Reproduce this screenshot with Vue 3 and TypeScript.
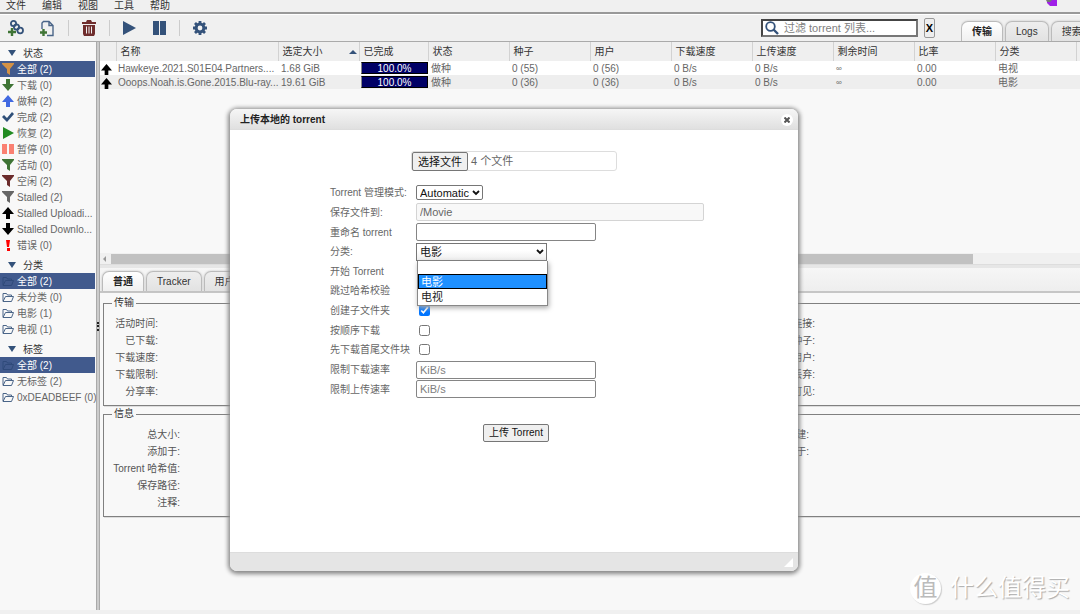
<script setup lang="ts">
import { ref } from 'vue'

interface FilterItem { icon: string; color: string; label: string; selected?: boolean }
interface FilterGroup { title: string; items: FilterItem[] }
interface Torrent { name: string; size: string; progress: string; status: string; seeds: string; peers: string; category: string }

const menus: string[] = ['文件', '编辑', '视图', '工具', '帮助']

const shapes: Record<string, string> = {
  funnel: 'M0 0H12V1L8 6V12L5 10V6L0 1Z',
  down: 'M4 0H8V5H12L6 12L0 5H4Z',
  up: 'M4 12H8V7H12L6 0L0 7H4Z',
  check: 'M0 6L2 4L5 7L10 1L12 3L5 11Z',
  play: 'M1 0L12 6L1 12Z',
  pause: 'M0 1H5V11H0ZM7 1H12V11H7Z',
  error: 'M4 1H8L7 8H5ZM5 9H8V12H5Z',
}

const groups: FilterGroup[] = [
  {
    title: '状态',
    items: [
      { icon: 'funnel', color: '#d39145', label: '全部 (2)', selected: true },
      { icon: 'down', color: '#3f7435', label: '下载 (0)' },
      { icon: 'up', color: '#4169e1', label: '做种 (2)' },
      { icon: 'check', color: '#2f4f78', label: '完成 (2)' },
      { icon: 'play', color: '#228b22', label: '恢复 (2)' },
      { icon: 'pause', color: '#fa8072', label: '暂停 (0)' },
      { icon: 'funnel', color: '#3f7435', label: '活动 (0)' },
      { icon: 'funnel', color: '#6b2c2c', label: '空闲 (2)' },
      { icon: 'funnel', color: '#666666', label: 'Stalled (2)' },
      { icon: 'up', color: '#000000', label: 'Stalled Uploadi...' },
      { icon: 'down', color: '#000000', label: 'Stalled Downlo...' },
      { icon: 'error', color: '#ff0000', label: '错误 (0)' },
    ],
  },
  {
    title: '分类',
    items: [
      { icon: 'folder', color: '#2f4a7a', label: '全部 (2)', selected: true },
      { icon: 'folder', color: '#4a6588', label: '未分类 (0)' },
      { icon: 'folder', color: '#4a6588', label: '电影 (1)' },
      { icon: 'folder', color: '#4a6588', label: '电视 (1)' },
    ],
  },
  {
    title: '标签',
    items: [
      { icon: 'folder', color: '#2f4a7a', label: '全部 (2)', selected: true },
      { icon: 'folder', color: '#4a6588', label: '无标签 (2)' },
      { icon: 'folder', color: '#4a6588', label: '0xDEADBEEF (0)' },
    ],
  },
]

const columns: string[] = ['', '名称', '选定大小', '已完成', '状态', '种子', '用户', '下载速度', '上传速度', '剩余时间', '比率', '分类', '']

const torrents: Torrent[] = [
  { name: 'Hawkeye.2021.S01E04.Partners....', size: '1.68 GiB', progress: '100.0%', status: '做种', seeds: '0 (55)', peers: '0 (56)', category: '电视' },
  { name: 'Ooops.Noah.is.Gone.2015.Blu-ray...', size: '19.61 GiB', progress: '100.0%', status: '做种', seeds: '0 (36)', peers: '0 (36)', category: '电影' },
]

const transferLeft: string[] = ['活动时间:', '已下载:', '下载速度:', '下载限制:', '分享率:']
const transferRight: string[] = ['连接:', '种子:', '用户:', '丢弃:', '可见:']
const infoLeft: string[] = ['总大小:', '添加于:', 'Torrent 哈希值:', '保存路径:', '注释:']
const infoRight: string[] = ['创建:', '创建于:']

const filter = ref('')
const mode = ref('Automatic')
const category = ref('电影')
const categories: string[] = ['', '电影', '电视']
const subfolder = ref(true)
</script>

<template>
  <div class="app">
    <nav class="menubar">
      <a v-for="m in menus" :key="m" href="#">{{ m }}</a>
      <svg class="badge" width="12" height="8" viewBox="0 0 12 8"><path d="M1 0H11V6H4L1 3Z" fill="#a020e8" /><path d="M0 0H6L4 2H1Z" fill="#777" /></svg>
    </nav>

    <header class="toolbar">
      <div class="tools">
        <button type="button" aria-label="link" class="tool wide">
          <svg width="17" height="17" viewBox="0 0 17 17" fill="none" stroke="#34527a" stroke-width="1.800">
            <circle cx="6.500" cy="3.500" r="2.600" /><circle cx="9.500" cy="7" r="2.600" /><circle cx="13.200" cy="10.500" r="2.800" />
            <path d="M5 8V16M1 12H9" stroke="#3f7435" stroke-width="2.400" />
          </svg>
        </button>
        <button type="button" aria-label="file" class="tool">
          <svg width="16" height="17" viewBox="0 0 16 17" fill="none">
            <path d="M3 9V3L4.500 1.500H10L14 5.500V15.500H8M10 1.500V5.500H14" stroke="#4a6588" stroke-width="1.400" />
            <path d="M4.500 9V16M1 12.500H8" stroke="#3f7435" stroke-width="2.400" />
          </svg>
        </button>
        <span class="sep"></span>
        <button type="button" aria-label="delete" class="tool">
          <svg width="14" height="16" viewBox="0 0 14 16" fill="#6f2d2d">
            <path d="M0 2H4L5 0H9L10 2H14V4H0ZM1 5H13V14L12 16H2L1 14Z" />
            <path d="M4.500 6.500V13.500M7 6.500V13.500M9.500 6.500V13.500" stroke="#f0f0f0" />
          </svg>
        </button>
        <span class="sep"></span>
        <button type="button" aria-label="resume" class="tool"><svg width="13" height="14" viewBox="0 0 13 14"><path d="M0 0L13 7L0 14Z" fill="#34527a" /></svg></button>
        <button type="button" aria-label="pause" class="tool pausebtn"><svg width="13" height="14" viewBox="0 0 13 14"><path d="M0 0H6V14H0ZM7 0H13V14H7Z" fill="#34527a" /></svg></button>
        <span class="sep"></span>
        <button type="button" aria-label="options" class="tool">
          <svg width="14" height="14" viewBox="0 0 14 14">
            <circle cx="7" cy="7" r="3.900" fill="none" stroke="#34527a" stroke-width="3" />
            <path d="M7 0V3M7 11V14M0 7H3M11 7H14M2 2L4 4M10 10L12 12M12 2L10 4M4 10L2 12" stroke="#34527a" stroke-width="2.800" />
          </svg>
        </button>
      </div>
      <div class="search">
        <svg width="14" height="14" viewBox="0 0 14 14" fill="none" stroke="#34527a"><circle cx="5.500" cy="5.500" r="4.300" stroke-width="1.800" /><path d="M8.500 8.500L13 13" stroke-width="2.400" /></svg>
        <input v-model="filter" type="text" aria-label="filter" placeholder="过滤 torrent 列表..." />
      </div>
      <button type="button" class="clear">X</button>
      <div class="tabs main-tabs">
        <button type="button" class="tab active">传输</button>
        <button type="button" class="tab">Logs</button>
        <button type="button" class="tab">搜索</button>
      </div>
    </header>

    <div class="work">
      <aside class="sidebar">
        <section v-for="g in groups" :key="g.title">
          <h2><svg width="8" height="6" viewBox="0 0 8 6"><path d="M0 0H8L4 6Z" fill="#34527a" /></svg><span>{{ g.title }}</span></h2>
          <ul>
            <li v-for="it in g.items" :key="it.label" :class="{ selected: it.selected }">
              <svg v-if="it.icon === 'folder'" width="12" height="12" viewBox="0 0 12 12" fill="none" :stroke="it.color">
                <path d="M1 10V2.500H4.500L5.500 4H9.500V5.500M1 10.500L3.500 5.500H11.500L9.500 10.500Z" />
              </svg>
              <svg v-else width="12" height="12" viewBox="0 0 12 12"><path :d="shapes[it.icon]" :fill="it.color" /></svg>
              <span>{{ it.label }}</span>
            </li>
          </ul>
        </section>
      </aside>
      <div class="divider"><i></i></div>

      <main class="content">
        <div class="list-pane">
          <div class="scroller">
            <table>
              <colgroup><col v-for="(c, i) in columns" :key="i" :class="'c' + i" /></colgroup>
              <thead>
                <tr>
                  <th v-for="(c, i) in columns" :key="i">{{ c }}<svg v-if="i === 2" class="sort" width="8" height="4" viewBox="0 0 8 4"><path d="M0 4L4 0L8 4Z" fill="#34527a" /></svg></th>
                </tr>
              </thead>
              <tbody>
                <tr v-for="t in torrents" :key="t.name">
                  <td class="state"><svg width="11" height="11" viewBox="0 0 12 12"><path :d="shapes.up" /></svg></td>
                  <td class="name">{{ t.name }}</td>
                  <td>{{ t.size }}</td>
                  <td class="prog"><div class="bar">{{ t.progress }}</div></td>
                  <td>{{ t.status }}</td>
                  <td>{{ t.seeds }}</td>
                  <td>{{ t.peers }}</td>
                  <td>0 B/s</td>
                  <td>0 B/s</td>
                  <td class="eta">∞</td>
                  <td>0.00</td>
                  <td>{{ t.category }}</td>
                  <td></td>
                </tr>
              </tbody>
            </table>
          </div>
          <div class="hscroll">
            <svg width="11" height="10" viewBox="0 0 11 10"><path d="M6 2V8L3 5Z" fill="#999" /></svg>
            <div class="thumb"></div>
          </div>
        </div>

        <div class="tabs prop-tabs">
          <button type="button" class="tab active">普通</button>
          <button type="button" class="tab">Tracker</button>
          <button type="button" class="tab">用户</button>
        </div>

        <div class="props">
          <fieldset>
            <legend>传输</legend>
            <div class="cols">
              <dl><dt v-for="l in transferLeft" :key="l">{{ l }}</dt></dl>
              <dl class="last"><dt v-for="l in transferRight" :key="l">{{ l }}</dt></dl>
            </div>
          </fieldset>
          <fieldset class="info">
            <legend>信息</legend>
            <div class="cols">
              <dl><dt v-for="l in infoLeft" :key="l">{{ l }}</dt></dl>
              <dl class="last"><dt v-for="l in infoRight" :key="l">{{ l }}</dt></dl>
            </div>
          </fieldset>
        </div>
      </main>
    </div>

    <div class="dialog" role="dialog" aria-labelledby="dlg-title">
      <div class="dlg-head">
        <h1 id="dlg-title">上传本地的 torrent</h1>
        <button type="button" aria-label="close"><svg width="6" height="6" viewBox="0 0 6 6"><path d="M0.500 0.500L5.500 5.500M5.500 0.500L0.500 5.500" stroke="#555" stroke-width="2" /></svg></button>
      </div>
      <form class="dlg-body" @submit.prevent>
        <label class="file">
          <input type="file" multiple />
          <span class="pick">选择文件</span>
          <span>4 个文件</span>
        </label>
        <div class="grid">
          <label for="mode">Torrent 管理模式:</label>
          <div class="combo mode">
            <select id="mode" v-model="mode"><option>Automatic</option></select>
            <svg class="chevron" width="8" height="6" viewBox="0 0 8 6"><path d="M1 1L4 4L7 1" fill="none" stroke="#111" stroke-width="1.800" /></svg>
          </div>
          <label for="path">保存文件到:</label>
          <input id="path" type="text" class="path" value="/Movie" disabled />
          <label for="rename">重命名 torrent</label>
          <input id="rename" type="text" class="text" />
          <label for="cat">分类:</label>
          <div class="combo category">
            <select id="cat" v-model="category"><option v-for="c in categories" :key="c">{{ c }}</option></select>
            <svg class="chevron" width="8" height="6" viewBox="0 0 8 6"><path d="M1 1L4 4L7 1" fill="none" stroke="#111" stroke-width="1.800" /></svg>
            <ul class="popup" role="listbox">
              <li v-for="c in categories" :key="c" role="option" :class="{ on: c === category }" @click="category = c">{{ c }}</li>
            </ul>
          </div>
          <label for="start">开始 Torrent</label>
          <input id="start" type="checkbox" checked />
          <label for="skip">跳过哈希校验</label>
          <input id="skip" type="checkbox" />
          <label for="sub">创建子文件夹</label>
          <input id="sub" v-model="subfolder" type="checkbox" />
          <label for="seq">按顺序下载</label>
          <input id="seq" type="checkbox" />
          <label for="first">先下载首尾文件块</label>
          <input id="first" type="checkbox" />
          <label for="dl">限制下载速率</label>
          <input id="dl" type="text" class="text" placeholder="KiB/s" />
          <label for="ul">限制上传速率</label>
          <input id="ul" type="text" class="text" placeholder="KiB/s" />
        </div>
        <button type="submit" class="submit">上传 Torrent</button>
      </form>
      <div class="dlg-foot"><svg width="9" height="9" viewBox="0 0 9 9"><path d="M9 0V9H0Z" fill="#fff" /></svg></div>
    </div>

    <div class="watermark"><span class="seal">值</span><span>什么值得买</span></div>
  </div>
</template>

<style>
body { margin: 0; background: #f0f0f0; overflow: hidden; }
</style>

<style scoped>
.app {
  position: relative;
  display: flex;
  flex-direction: column;
  height: 100vh;
  box-sizing: border-box;
  padding-bottom: 4px;
  font: 10px/14px "Liberation Sans", "Noto Sans CJK SC", sans-serif;
  color: #666;
  background: #f0f0f0;
}
.app * { box-sizing: border-box; }
button, input, select { font: inherit; color: inherit; margin: 0; }
ul, dl, h1, h2 { margin: 0; padding: 0; list-style: none; font-size: 10px; font-weight: normal; }

.menubar { display: flex; gap: 16px; flex: none; height: 14px; padding: 0 22px 0 6px; line-height: 12px; border-bottom: 2px solid #999; overflow: hidden; }
.menubar a { color: #333; text-decoration: none; }
.badge { margin-left: auto; }

.toolbar { display: flex; align-items: center; flex: none; height: 28px; padding-left: 7px; border-top: 1px solid #fff; border-bottom: 1px solid #aaa; background: #f0f0f0; }
.tools { display: flex; align-items: center; flex: 1; }
.tool { display: flex; padding: 0; border: 0; background: none; }
.tool.wide { margin-right: 15px; }
.tool.pausebtn { margin-left: 17px; }
.sep { width: 1px; height: 16px; margin: 0 13px; background: #ccc; }
.search { display: flex; align-items: center; width: 157px; height: 18px; padding: 0 2px; border: 2px solid #444; border-right-color: #777; border-bottom-color: #777; background: #fff; }
.search svg { flex: none; }
.search input { flex: 1; min-width: 0; margin-left: 5px; padding: 0; border: 0; outline: 0; font-size: 11px; background: none; }
.search input::placeholder, .grid input::placeholder { color: #808080; opacity: 1; }
.clear { width: 11px; height: 20px; margin-left: 6px; padding: 0; border: 1px solid #999; border-radius: 2px; background: #eee; color: #000; font-weight: bold; font-size: 11px; }

.tabs { display: flex; gap: 2px; align-items: flex-end; }
.tab { height: 20px; padding: 0 10px; border: 1px solid #bbb; border-bottom: 0; border-radius: 7px 7px 0 0; background: linear-gradient(#eee, #e2e2e2); box-shadow: 0 0 2px #bbb; color: #333; white-space: nowrap; }
.tab.active { background: linear-gradient(#fff, #f0f0f0); font-weight: bold; color: #222; }
.main-tabs { width: 119px; margin-left: 26px; align-self: stretch; overflow: hidden; }

.work { display: flex; flex: 1; min-height: 0; background: #f8f8f8; }
.sidebar { flex: none; width: 95px; padding-top: 3px; }
.sidebar section + section { margin-top: 4px; }
.sidebar h2 { display: flex; align-items: center; gap: 7px; height: 16px; padding-left: 8px; color: #333; }
.sidebar li { display: flex; align-items: center; gap: 3px; height: 16px; padding-left: 2px; white-space: nowrap; }
.sidebar li svg { flex: none; }
.sidebar span { padding-top: 2px; }
.sidebar li.selected { background: #415a8d; color: #fff; }
.divider { display: flex; align-items: center; justify-content: center; flex: none; width: 4px; margin-left: 1px; border: solid #aaa; border-width: 0 1px; background: #ccc; }
.divider i { width: 2px; height: 9px; border-right: 2px dotted #222; }
.content { flex: 1; min-width: 0; }

.list-pane { display: flex; flex-direction: column; height: 223px; }
.scroller { flex: 1; overflow: hidden; }
table { width: 1040px; table-layout: fixed; border-collapse: collapse; }
.c0 { width: 16px; }
.c1 { width: 162px; }
.c3 { width: 69px; }
.c2, .c4, .c5, .c6, .c7, .c8, .c9, .c10, .c11 { width: 81px; }
th { position: relative; height: 19px; padding: 0 0 0 4px; border-right: 1px solid #d2d2d2; background: #efefef; color: #333; font-weight: normal; text-align: left; }
.sort { position: absolute; right: 2px; top: 8px; }
td { height: 14px; padding: 1px 0 0 3px; line-height: 13px; white-space: nowrap; }
td.name { padding-left: 2px; }
td.eta { font-size: 8px; }
tbody tr { background: #fff; }
tbody tr:nth-child(even) { background: #eee; }
td.state { padding: 2px 0 0 1px; }
td.state svg { display: block; }
td.prog { padding: 0 0 0 2px; }
.bar { height: 12px; border: 1px solid #000; border-left-color: #888; background: #006; color: #fff; line-height: 11px; text-align: center; }
.hscroll { display: flex; align-items: center; height: 12px; background: #f0f0f0; border-bottom: 1px solid #ddd; }
.hscroll svg { flex: none; }
.thumb { width: 88%; height: 10px; background: #c1c1c1; }

.prop-tabs { height: 28px; padding: 0 2px; border-top: 3px solid #e6e6e6; border-bottom: 2px solid #c6c6c6; background: linear-gradient(#f6f6f6, #eee); }
.props { padding: 3px 0 0 3px; }
fieldset { height: 110px; margin: 0 -4px 0 0; padding: 5px 0 0 1px; border: 1px solid #808080; box-shadow: 1px 1px 0 #ddd; }
fieldset legend { margin-left: 7px; padding: 0 2px; line-height: 14px; color: #333; }
fieldset.info { margin-top: 1px; }
.cols { display: grid; grid-template-columns: repeat(3, 1fr); }
dl { width: 53px; }
dl.last { grid-column: 3; width: 58px; }
.info dl { width: 75px; }
.info dl.last { width: 52px; }
dt { line-height: 17px; text-align: right; white-space: nowrap; color: #555; }

.dialog { position: absolute; left: 230px; top: 109px; width: 568px; border-radius: 7px; background: #fff; box-shadow: 0 1px 4px 2px #888; }
.dlg-head { display: flex; align-items: center; justify-content: space-between; height: 21px; padding: 1px 5px 0 10px; border-radius: 7px 7px 0 0; border-bottom: 1px solid #ddd; background: linear-gradient(#f6f6f6, #e0e0e0); }
.dlg-head h1 { font-weight: bold; color: #222; }
.dlg-head button { display: flex; align-items: center; justify-content: center; width: 12px; height: 12px; padding: 0; border: 0; border-radius: 50%; background: #fff; }
.dlg-body { display: flex; flex-direction: column; height: 422px; padding-top: 21px; }
.file { display: flex; align-items: center; gap: 3px; width: 206px; height: 20px; margin-left: 181px; border: 1px solid #ddd; border-radius: 3px; font-size: 11px; }
.file input { position: absolute; width: 1px; height: 1px; opacity: 0; }
.pick { height: 19px; padding: 0 5px; border: 1px solid #767676; border-radius: 2px; background: #efefef; color: #111; line-height: 18px; }
.grid { display: grid; grid-template-columns: 86px auto; grid-template-rows: repeat(11, 1fr); align-items: center; justify-items: start; height: 216px; margin: 12px 0 0 100px; }
.grid label { padding-top: 1px; white-space: nowrap; }
.grid input[type="text"] { height: 18px; padding: 0 3px; border: 1px solid #858585; border-radius: 2px; background: #fff; font-size: 11px; }
.grid .text { width: 180px; }
.grid .path[type="text"] { width: 288px; border-color: #d4d4d4; background: #f8f8f8; }
.grid input[type="checkbox"] { width: 11px; height: 11px; margin-left: 3px; }
.combo { position: relative; display: flex; align-items: center; }
select { appearance: none; width: 100%; height: 100%; padding: 0 3px; border: 1px solid #767676; border-radius: 2px; background: #fff; color: #111; font-size: 11px; }
.chevron { position: absolute; right: 3px; pointer-events: none; }
.mode { width: 67px; height: 15px; }
.category { width: 131px; height: 18px; }
.category select { border-radius: 0; background: linear-gradient(#fff 40%, #eee); }
.popup { position: absolute; z-index: 1; left: 1px; top: 18px; width: 131px; padding-bottom: 1px; border: 1px solid #888; border-top: 0; background: #fff; box-shadow: 1px 2px 5px #aaa; color: #222; font-size: 11px; }
.popup li { height: 15px; padding: 0 2px; border: 1px solid #fff; line-height: 14px; }
.popup li:first-child { height: 13px; }
.popup li.on { border-color: #000; background: #1e90ff; color: #fff; }
.submit { align-self: center; height: 18px; margin-top: 25px; margin-left: 4px; padding: 0 5px; border: 1px solid #767676; border-radius: 2px; background: #efefef; color: #111; }
.dlg-foot { display: flex; align-items: center; justify-content: flex-end; height: 19px; padding-right: 5px; border-top: 1px solid #ddd; border-radius: 0 0 7px 7px; background: #e5e5e5; }

.watermark { position: absolute; right: 10px; bottom: 10px; display: flex; align-items: center; gap: 9px; color: #fff; font-size: 24px; line-height: 32px; text-shadow: 1px 1px 1px #aaa; }
.seal { width: 31px; height: 31px; border-radius: 50%; background: #fff; box-shadow: 1px 1px 1px #ccc; color: #bbb; line-height: 30px; text-align: center; text-shadow: none; }
</style>
